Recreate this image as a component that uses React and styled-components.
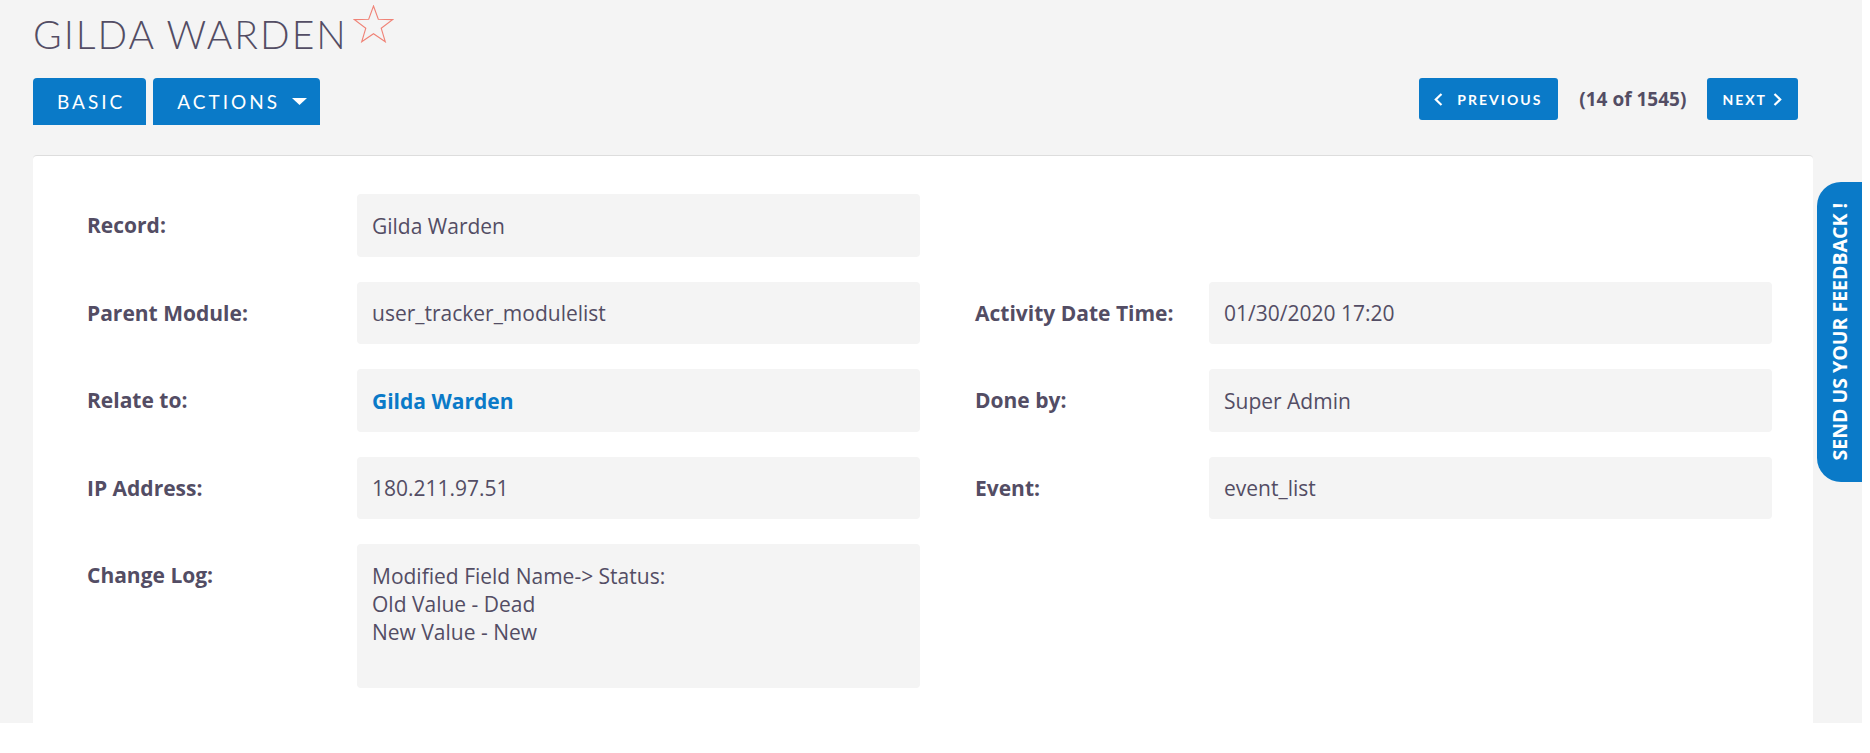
import React from "react";
import styled, { createGlobalStyle } from "styled-components";

const BLUE = "#0a7ac8";
const INK = "#534d64";
const SANS = `"Open Sans", Lato, sans-serif`;

const GlobalStyle = createGlobalStyle`
  body {
    margin: 0;
    background: #fff;
    font-family: ${SANS};
    color: ${INK};
  }
  * { box-sizing: border-box; }
`;

const Page = styled.div`
  width: 1862px;
  height: 723px;
  background: #f4f4f4;
  padding: 8px 49px 0 33px;
  display: flex;
  flex-direction: column;
`;

const TitleRow = styled.div`
  display: flex;
  align-items: flex-start;
  gap: 5px;
`;

const Title = styled.h2`
  margin: 0;
  font-family: Lato, sans-serif;
  font-weight: 300;
  font-size: 39px;
  line-height: 52px;
  letter-spacing: 2px;
  text-transform: uppercase;
  color: ${INK};
`;

const StarIcon = styled.svg`
  margin-top: -3px;
  flex: none;
`;

const Toolbar = styled.div`
  margin-top: 18px;
  display: flex;
  justify-content: space-between;
  align-items: flex-start;
  padding-right: 15px;
`;

const Tabs = styled.div`
  display: flex;
  gap: 7px;
`;

const Tab = styled.button`
  height: 47px;
  border: none;
  border-radius: 4px 4px 0 0;
  background: ${BLUE};
  color: #fff;
  font-family: Lato, sans-serif;
  font-size: 19px;
  letter-spacing: 3px;
  padding: 0 ${(p) => (p.$menu ? 13 : 21)}px 0 24px;
  display: flex;
  align-items: center;
  gap: 12px;
  cursor: pointer;
`;

const Pager = styled.div`
  display: flex;
  align-items: center;
`;

const NavButton = styled.button`
  height: 42px;
  border: none;
  border-radius: 3px;
  background: ${BLUE};
  color: #fff;
  font-family: Lato, sans-serif;
  font-weight: 700;
  font-size: 14px;
  letter-spacing: 2px;
  padding: 0 16px 0 15px;
  display: flex;
  align-items: center;
  gap: ${(p) => p.$gap}px;
  cursor: pointer;
`;

const Counter = styled.span`
  margin: 0 21px;
  font-weight: 700;
  font-size: 19px;
  color: ${INK};
`;

const Card = styled.div`
  flex: 1;
  margin-top: 30px;
  background: #fff;
  border-top: 1px solid #dddddd;
  border-radius: 4px 4px 0 0;
  padding: 38px 41px 34px 54px;
  display: flex;
  flex-direction: column;
  gap: 25px;
`;

const Row = styled.div`
  display: grid;
  grid-template-columns: 833px 797px;
  column-gap: 55px;
`;

const Field = styled.div`
  display: grid;
  grid-template-columns: ${(p) => p.$labelWidth}px 1fr;
`;

const Label = styled.div`
  padding-top: 17px;
  font-weight: 700;
  font-size: 21px;
  line-height: 28px;
  color: ${INK};
`;

const Value = styled.div`
  min-height: ${(p) => (p.$tall ? 144 : 62.5)}px;
  background: #f4f4f4;
  border-radius: 4px;
  padding: 17.5px 15px 17px;
  font-size: 21px;
  line-height: 28px;
  color: ${INK};
  white-space: pre-line;
`;

const RecordLink = styled.a`
  color: ${BLUE};
  font-weight: 700;
  text-decoration: none;
`;

const FeedbackTab = styled.div`
  position: fixed;
  right: 8px;
  top: 182px;
  width: 45px;
  height: 300px;
  background: ${BLUE};
  border-radius: 24px 0 0 24px;
  display: flex;
  align-items: center;
  justify-content: center;
`;

const FeedbackText = styled.span`
  writing-mode: vertical-rl;
  transform: rotate(180deg);
  color: #fff;
  font-weight: 700;
  font-size: 19.5px;
  white-space: nowrap;
`;

const Chevron = ({ dir }) => (
  <svg width="9" height="13" viewBox="0 0 9 13">
    <polyline
      points={dir === "left" ? "7.5,1 1.8,6.5 7.5,12" : "1.5,1 7.2,6.5 1.5,12"}
      fill="none"
      stroke="#fff"
      strokeWidth="2.2"
    />
  </svg>
);

const Caret = () => (
  <svg width="15" height="7" viewBox="0 0 15 7">
    <polygon points="0,0 15,0 7.5,7" fill="#fff" />
  </svg>
);

const left = [
  { label: "Record:", value: "Gilda Warden" },
  { label: "Parent Module:", value: "user_tracker_modulelist" },
  { label: "Relate to:", value: "Gilda Warden", link: true },
  { label: "IP Address:", value: "180.211.97.51" },
  { label: "Change Log:", value: "Modified Field Name-> Status:\nOld Value - Dead\nNew Value - New", tall: true },
];

const right = [
  null,
  { label: "Activity Date Time:", value: "01/30/2020 17:20" },
  { label: "Done by:", value: "Super Admin" },
  { label: "Event:", value: "event_list" },
  null,
];

const DetailField = ({ item, labelWidth }) =>
  item ? (
    <Field $labelWidth={labelWidth}>
      <Label>{item.label}</Label>
      <Value $tall={item.tall}>
        {item.link ? <RecordLink href="#">{item.value}</RecordLink> : item.value}
      </Value>
    </Field>
  ) : (
    <div />
  );

export default function App() {
  return (
    <>
      <GlobalStyle />
      <Page>
        <TitleRow>
          <Title>Gilda Warden</Title>
          <StarIcon width="41" height="38" viewBox="0 0 41 38">
            <polygon
              points="20.5,1 25.3,14.3 39.5,14.6 28.2,23.2 32.3,36.8 20.5,28.7 8.7,36.8 12.8,23.2 1.5,14.6 15.7,14.3"
              fill="none"
              stroke="#f08377"
              strokeWidth="1.1"
            />
          </StarIcon>
        </TitleRow>

        <Toolbar>
          <Tabs>
            <Tab>BASIC</Tab>
            <Tab $menu>
              ACTIONS
              <Caret />
            </Tab>
          </Tabs>
          <Pager>
            <NavButton $gap={14}>
              <Chevron dir="left" />
              PREVIOUS
            </NavButton>
            <Counter>(14 of 1545)</Counter>
            <NavButton $gap={6}>
              NEXT
              <Chevron dir="right" />
            </NavButton>
          </Pager>
        </Toolbar>

        <Card>
          {left.map((item, i) => (
            <Row key={i}>
              <DetailField item={item} labelWidth={270} />
              <DetailField item={right[i]} labelWidth={234} />
            </Row>
          ))}
        </Card>
      </Page>

      <FeedbackTab>
        <FeedbackText>SEND US YOUR FEEDBACK !</FeedbackText>
      </FeedbackTab>
    </>
  );
}
